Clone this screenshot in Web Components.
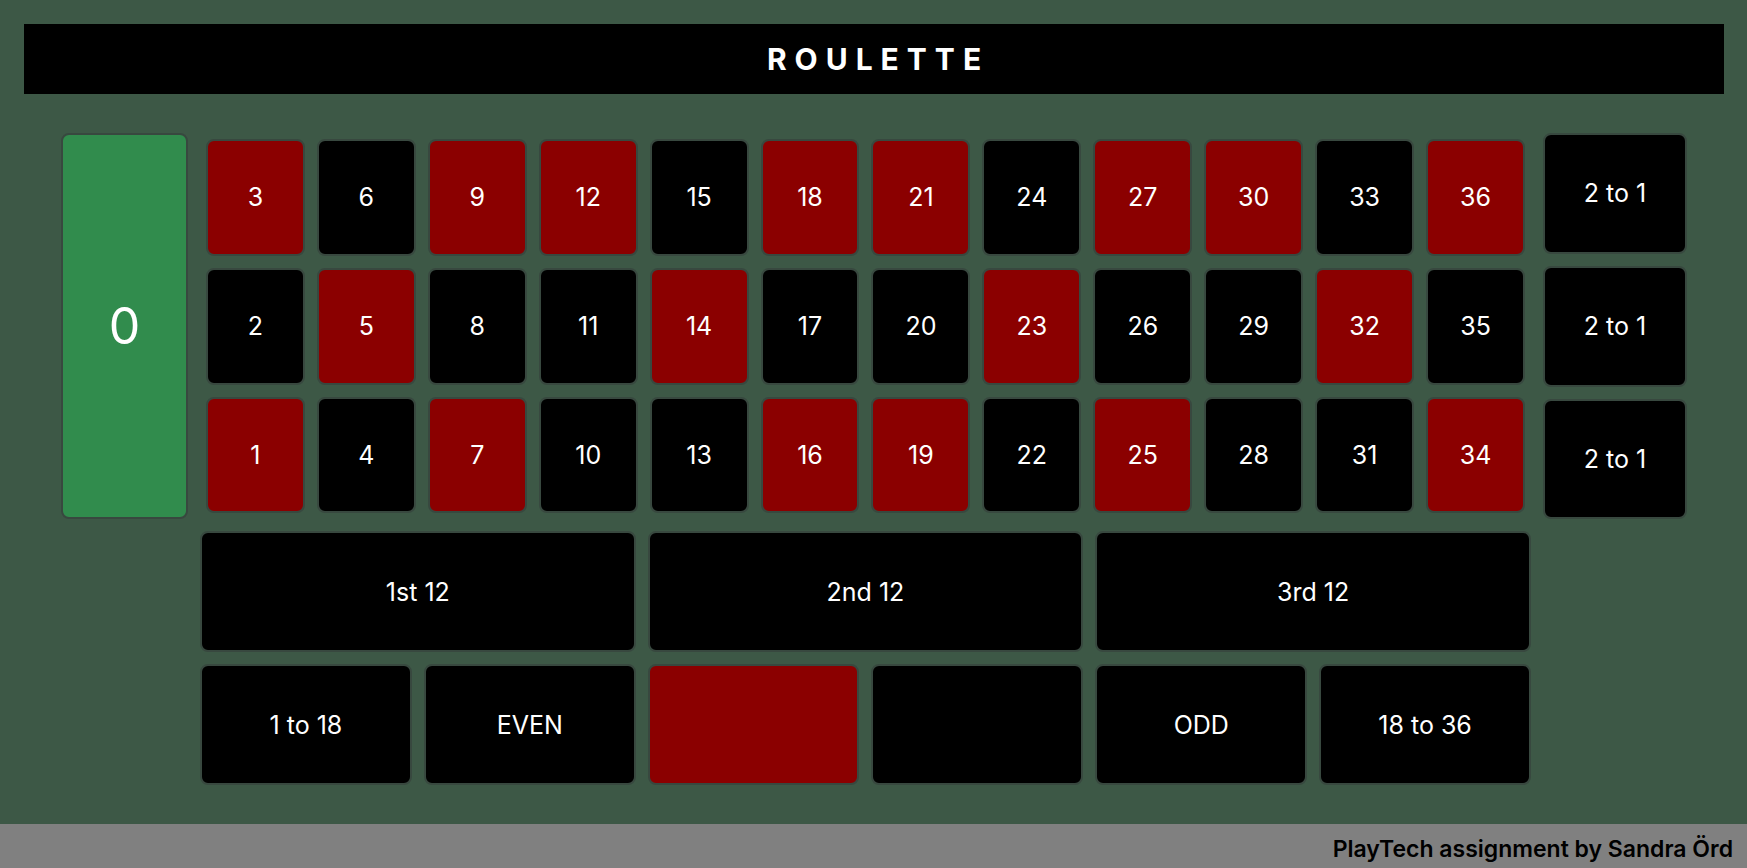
<!DOCTYPE html>
<html lang="en">
<head>
<meta charset="utf-8">
<title>Roulette</title>
<style>
  body { margin: 0; font-family: Inter, "Liberation Sans", sans-serif; }
</style>
</head>
<body>
<roulette-app></roulette-app>
<script>
class BetCell extends HTMLElement {
  constructor() {
    super();
    this.attachShadow({ mode: "open" }).innerHTML = `
      <style>
        :host { display: grid; min-width: 0; min-height: 0; --fill: #000; }
        :host([tone="red"]) { --fill: #8b0000; }
        :host([tone="green"]) { --fill: #318c4d; --size: 50px; }
        button {
          box-sizing: border-box; width: 100%; height: 100%; margin: 0; padding: 0;
          border: 2px solid #38483f; border-radius: 8px;
          background: var(--fill); color: #fff; cursor: pointer;
          font-family: inherit; font-size: var(--size, 25px); line-height: 1.2;
        }
      </style>
      <button type="button"><slot></slot></button>`;
    if (this.hasAttribute("label"))
      this.shadowRoot.querySelector("button").setAttribute("aria-label", this.getAttribute("label"));
  }
}
customElements.define("bet-cell", BetCell);

class NumberGrid extends HTMLElement {
  constructor() {
    super();
    const reds = new Set([1, 3, 5, 7, 9, 12, 14, 16, 18, 19, 21, 23, 25, 27, 30, 32, 34, 36]);
    let cells = "";
    for (let row = 3; row > 0; row--)
      for (let n = row; n <= 36; n += 3)
        cells += `<bet-cell tone="${reds.has(n) ? "red" : "black"}">${n}</bet-cell>`;
    this.attachShadow({ mode: "open" }).innerHTML = `
      <style>
        :host {
          display: grid; padding: 6px; gap: 12px;
          grid-template: repeat(3, minmax(0, 1fr)) / repeat(12, minmax(0, 1fr));
        }
      </style>${cells}`;
  }
}
customElements.define("number-grid", NumberGrid);

class BetGroup extends HTMLElement {
  constructor() {
    super();
    this.attachShadow({ mode: "open" }).innerHTML = `
      <style>
        :host { display: grid; gap: 12px; grid-auto-flow: column; grid-auto-columns: minmax(0, 1fr); }
        :host([vertical]) { grid-auto-flow: row; grid-auto-rows: minmax(0, 1fr); }
      </style><slot></slot>`;
  }
}
customElements.define("bet-group", BetGroup);

class RouletteBoard extends HTMLElement {
  constructor() {
    super();
    this.attachShadow({ mode: "open" }).innerHTML = `
      <style>
        :host {
          display: grid; gap: 12px; padding: 39px 60px 39px 61px;
          grid-template: repeat(5, minmax(60px, 1fr)) / 127px minmax(0, 1fr) 144px;
        }
        .zero, .numbers, .columns { grid-row: 1 / 4; }
        .dozens, .outside { grid-column: 2; }
      </style>
      <bet-cell class="zero" tone="green">0</bet-cell>
      <number-grid class="numbers"></number-grid>
      <bet-group class="columns" vertical>
        <bet-cell>2 to 1</bet-cell><bet-cell>2 to 1</bet-cell><bet-cell>2 to 1</bet-cell>
      </bet-group>
      <bet-group class="dozens">
        <bet-cell>1st 12</bet-cell><bet-cell>2nd 12</bet-cell><bet-cell>3rd 12</bet-cell>
      </bet-group>
      <bet-group class="outside">
        <bet-cell>1 to 18</bet-cell><bet-cell>EVEN</bet-cell>
        <bet-cell tone="red" label="Red"></bet-cell><bet-cell label="Black"></bet-cell>
        <bet-cell>ODD</bet-cell><bet-cell>18 to 36</bet-cell>
      </bet-group>`;
  }
}
customElements.define("roulette-board", RouletteBoard);

class PageTitle extends HTMLElement {
  constructor() {
    super();
    this.attachShadow({ mode: "open" }).innerHTML = `
      <style>
        :host { display: block; margin: 24px 23px 0 24px; padding: 17px 0; background: #000; color: #fff; }
        h1 { margin: 0; font-size: 30px; line-height: 36px; letter-spacing: 8px; text-indent: 8px; text-align: center; }
      </style>
      <h1><slot></slot></h1>`;
  }
}
customElements.define("page-title", PageTitle);

class PageFooter extends HTMLElement {
  constructor() {
    super();
    this.attachShadow({ mode: "open" }).innerHTML = `
      <style>
        :host { display: block; padding: 11px 14px 5px; background: #808080; color: #000; }
        footer { font-size: 23px; line-height: 28px; font-weight: 600; text-align: right; }
      </style>
      <footer><slot></slot></footer>`;
  }
}
customElements.define("page-footer", PageFooter);

class RouletteApp extends HTMLElement {
  constructor() {
    super();
    this.attachShadow({ mode: "open" }).innerHTML = `
      <style>
        :host { display: flex; flex-direction: column; min-height: 100vh; background: #3d5846; }
        roulette-board { flex: 1; }
      </style>
      <page-title>ROULETTE</page-title>
      <roulette-board></roulette-board>
      <page-footer>PlayTech assignment by Sandra Örd</page-footer>`;
  }
}
customElements.define("roulette-app", RouletteApp);
</script>
</body>
</html>
